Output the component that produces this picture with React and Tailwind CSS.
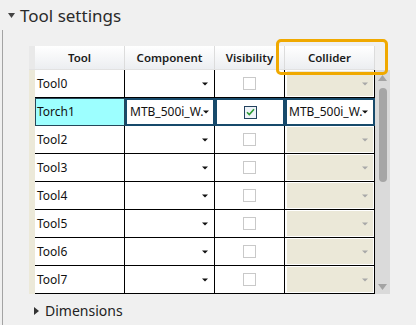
import React from "react";

const tools = ["Tool0", "Torch1", "Tool2", "Tool3", "Tool4", "Tool5", "Tool6", "Tool7"];

function Arrow({ gray }) {
  return (
    <svg width="6" height="4" viewBox="0 0 6 4" className="shrink-0">
      <path d="M0 0.5h6L3 3.5z" fill={gray ? "#a8a8a8" : "#111"} />
    </svg>
  );
}

function HeaderCell({ w, children }) {
  return (
    <div
      className={`${w} h-full flex items-center justify-center border-r border-[#dcdcdc] bg-linear-to-b from-white to-[#eceef1] text-[11.5px] font-semibold text-[#1b1b1b]`}
    >
      {children}
    </div>
  );
}

function Row({ name, selected }) {
  return (
    <div className="flex h-[28px]">
      <div className="w-[6px] bg-[#ece9d9]" />
      {selected ? (
        <>
          <div className="w-[90px] h-full border border-[#25475a] bg-[#9dffff] pl-[1px] flex items-center">
            {name}
          </div>
          <div className="w-[90px] h-full border-2 border-[#174a6b] bg-white pl-[3px] pr-[5px] flex items-center justify-between">
            <span>MTB_500i_W.</span>
            <Arrow />
          </div>
          <div className="w-[70px] h-full border-2 border-[#174a6b] bg-white flex items-center justify-center">
            <div className="w-[13px] h-[13px] border border-[#23425f] bg-[#eef3f8] flex items-center justify-center">
              <svg width="9" height="8" viewBox="0 0 9 8">
                <path d="M1 4.2l2.3 2.3L8 1.3" fill="none" stroke="#2b9b35" strokeWidth="1.6" />
              </svg>
            </div>
          </div>
          <div className="w-[90px] h-full border-2 border-[#174a6b] bg-white pl-[2px] pr-[5px] flex items-center justify-between">
            <span>MTB_500i_W.</span>
            <Arrow />
          </div>
        </>
      ) : (
        <>
          <div className="w-[90px] h-full border-r border-b border-black bg-white pl-[2px] flex items-center">
            {name}
          </div>
          <div className="w-[90px] h-full border-r border-b border-black bg-white pr-[6px] flex items-center justify-end">
            <Arrow />
          </div>
          <div className="w-[70px] h-full border-r border-b border-black bg-white flex items-center justify-center">
            <div className="w-[13px] h-[13px] border border-[#c9c9c9] bg-white" />
          </div>
          <div className="w-[90px] h-full border-r border-b border-black bg-white pt-[1px] pb-[1px] pl-[2px] pr-[1px]">
            <div className="h-full bg-[#ebe8d8] pr-[5px] flex items-center justify-end">
              <Arrow gray />
            </div>
          </div>
        </>
      )}
    </div>
  );
}

export default function App() {
  return (
    <div className="w-[416px] h-[325px] bg-[#f0f0f0] relative overflow-hidden font-['Noto_Sans',sans-serif] text-[12px] text-[#111]">
      <div className="h-[30px] flex items-center pl-[8px] gap-[5px]">
        <svg width="7" height="5" viewBox="0 0 7 5">
          <path d="M0 0h7L3.5 5z" fill="#444" />
        </svg>
        <span className="text-[17px] text-[#2a2a2a] leading-none">Tool settings</span>
      </div>

      <div className="ml-[2px] border-l border-[#a3a3a3] h-[295px] pt-[16px]">
        <div className="flex ml-[26px]">
          <div className="flex flex-col">
            <div className="flex h-[24px] border-b border-[#e2e2e2]">
              <div className="w-[6px] bg-[#e9e9e9]" />
              <HeaderCell w="w-[90px]">Tool</HeaderCell>
              <HeaderCell w="w-[90px]">Component</HeaderCell>
              <HeaderCell w="w-[70px]">Visibility</HeaderCell>
              <HeaderCell w="w-[90px]">Collider</HeaderCell>
            </div>
            {tools.map((t, i) => (
              <Row key={t} name={t} selected={i === 1} />
            ))}
          </div>
          <div className="flex flex-col w-[15px]">
            <div className="h-[24px]" />
            <div className="h-[224px] bg-[#dadada] flex flex-col items-center">
              <svg width="9" height="6" viewBox="0 0 9 6" className="mt-[5px]">
                <path d="M0 6h9L4.5 0z" fill="#a3a3a3" />
              </svg>
              <div className="w-[8px] h-[94px] mt-[7px] rounded-[4px] bg-[#a6a6a6]" />
              <div className="flex-1" />
              <svg width="9" height="6" viewBox="0 0 9 6" className="mb-[4px]">
                <path d="M0 0h9L4.5 6z" fill="#a3a3a3" />
              </svg>
            </div>
          </div>
        </div>

        <div className="h-[34px] flex items-center pl-[31px] gap-[6px]">
          <svg width="5" height="8" viewBox="0 0 5 8">
            <path d="M0 0v8l5-4z" fill="#333" />
          </svg>
          <span className="text-[14px] text-[#222] leading-none">Dimensions</span>
        </div>
      </div>

      <div className="absolute left-[276px] top-[39px] w-[112px] h-[36px] border-[3px] border-[#f0a900] rounded-[5px]" />
    </div>
  );
}
